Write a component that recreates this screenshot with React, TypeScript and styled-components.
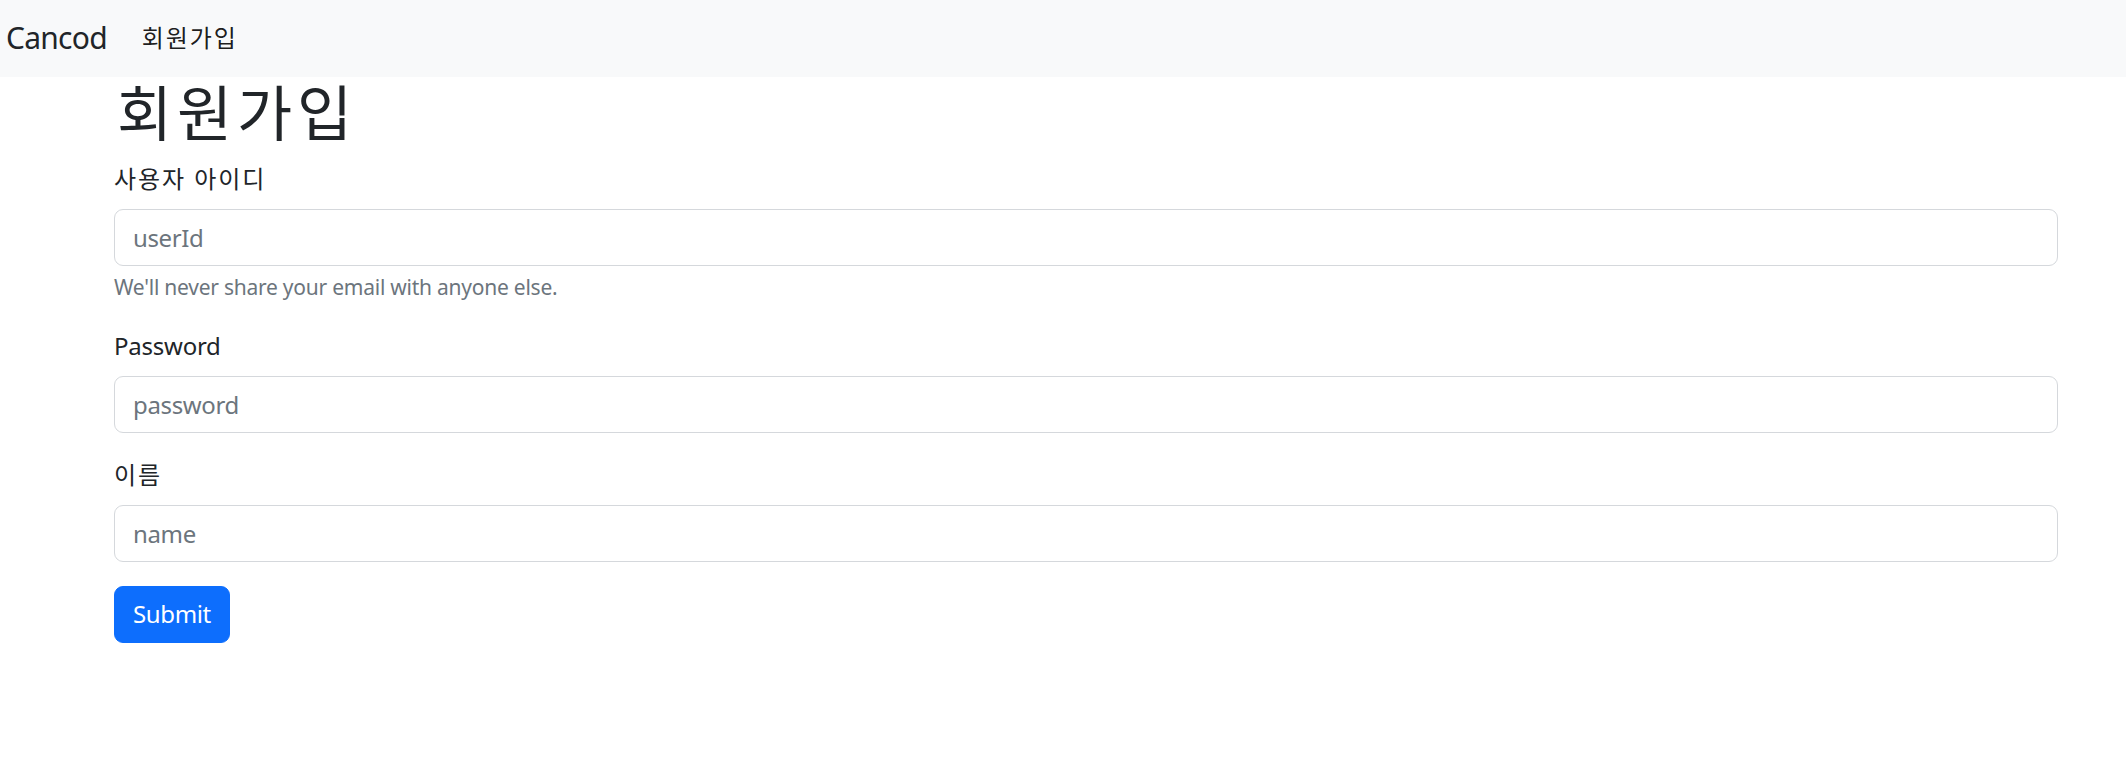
import React from "react";
import styled, { createGlobalStyle } from "styled-components";

const FONT = `"Noto Sans", "Noto Sans CJK KR", sans-serif`;

const Global = createGlobalStyle`
  html, body { margin: 0; padding: 0; background: #fff; }
  body { font-family: ${FONT}; color: #212529; letter-spacing: -0.015em; }
  * { box-sizing: border-box; }
`;

const Hangul = styled.span`
  letter-spacing: 0.08em;
`;

const NavBar = styled.nav`
  height: 77px;
  background: #f8f9fa;
  display: flex;
  align-items: center;
  padding: 0 6px;
  gap: 35px;
`;

const Brand = styled.a`
  font-size: 30px;
  line-height: 45px;
  letter-spacing: -0.025em;
  color: #212529;
  text-decoration: none;
  margin-top: -2px;
`;

const NavLink = styled.a`
  font-size: 24px;
  line-height: 36px;
  color: rgba(0, 0, 0, 0.9);
  text-decoration: none;
  margin-top: -2px;
`;

const Container = styled.main`
  padding-left: 114px;
  width: 2058px;
`;

const Title = styled.h1`
  margin: 0 0 12px;
  font-size: 60px;
  line-height: 72px;
  font-weight: 400;
  color: #212529;
  padding-left: 3px;
`;

const Field = styled.div<{ $gap?: boolean }>`
  display: flex;
  flex-direction: column;
  margin-bottom: ${(p) => (p.$gap ? 24 : 0)}px;
`;

const Label = styled.label`
  font-size: 24px;
  line-height: 36px;
  margin-bottom: 12px;
  color: #212529;
`;

const Input = styled.input`
  height: 57px;
  width: 100%;
  padding: 9px 18px;
  font-family: ${FONT};
  font-size: 24px;
  line-height: 36px;
  letter-spacing: -0.015em;
  color: #212529;
  border: 1.5px solid #d5d8dc;
  border-radius: 9px;
  outline: none;
  &::placeholder { color: #6c757d; opacity: 1; }
`;

const Help = styled.div`
  margin-top: 6px;
  font-size: 21px;
  line-height: 31.5px;
  color: #6c757d;
`;

const Button = styled.button`
  height: 57px;
  padding: 0 18px;
  font-family: ${FONT};
  font-size: 24px;
  line-height: 36px;
  letter-spacing: -0.015em;
  color: #fff;
  background: #0d6efd;
  border: 1.5px solid #0d6efd;
  border-radius: 9px;
  cursor: pointer;
  align-self: flex-start;
`;

export default function App() {
  return (
    <>
      <Global />
      <NavBar>
        <Brand href="#">Cancod</Brand>
        <NavLink href="#"><Hangul>회원가입</Hangul></NavLink>
      </NavBar>
      <Container>
        <Title><Hangul>회원가입</Hangul></Title>
        <Field $gap>
          <Label><Hangul>사용자 아이디</Hangul></Label>
          <Input placeholder="userId" />
          <Help>We'll never share your email with anyone else.</Help>
        </Field>
        <Field $gap>
          <Label>Password</Label>
          <Input type="password" placeholder="password" />
        </Field>
        <Field $gap>
          <Label><Hangul>이름</Hangul></Label>
          <Input placeholder="name" />
        </Field>
        <Field>
          <Button type="submit">Submit</Button>
        </Field>
      </Container>
    </>
  );
}
